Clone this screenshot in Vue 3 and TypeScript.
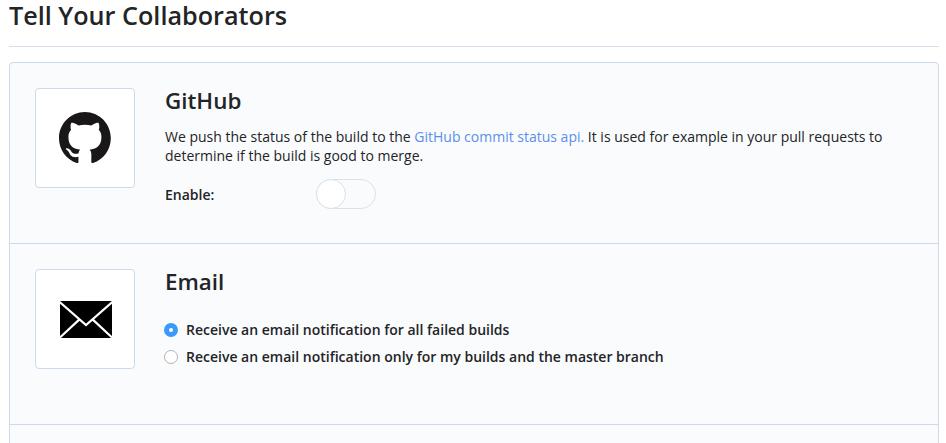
<script setup lang="ts">
import { ref } from 'vue'

type Choice = { value: string; label: string }

const enabled = ref(false)
const selected = ref('all')
const choices: Choice[] = [
  { value: 'all', label: 'Receive an email notification for all failed builds' },
  { value: 'mine', label: 'Receive an email notification only for my builds and the master branch' },
]
</script>

<template>
  <main class="page">
    <h1 class="title">Tell Your Collaborators</h1>
    <div class="panel">
      <section class="row">
        <div class="logo">
          <svg class="github" viewBox="0 0 98 96" aria-hidden="true">
            <path d="M48.854 0C21.839 0 0 22 0 49.217c0 21.756 13.993 40.172 33.405 46.69 2.427.49 3.316-1.059 3.316-2.362 0-1.141-.08-5.052-.08-9.127-13.59 2.934-16.42-5.867-16.42-5.867-2.184-5.704-5.42-7.17-5.42-7.17-4.448-3.015.324-3.015.324-3.015 4.934.326 7.523 5.052 7.523 5.052 4.367 7.496 11.404 5.378 14.235 4.074.404-3.178 1.699-5.378 3.074-6.6-10.839-1.141-22.243-5.378-22.243-24.283 0-5.378 1.94-9.778 5.014-13.2-.485-1.222-2.184-6.275.486-13.038 0 0 4.125-1.304 13.426 5.052a46.97 46.97 0 0 1 12.214-1.63c4.125 0 8.33.571 12.213 1.63 9.302-6.356 13.427-5.052 13.427-5.052 2.67 6.763.97 11.816.485 13.038 3.155 3.422 5.015 7.822 5.015 13.2 0 18.905-11.404 23.06-22.324 24.283 1.78 1.548 3.316 4.481 3.316 9.126 0 6.6-.08 11.897-.08 13.526 0 1.304.89 2.853 3.316 2.364 19.412-6.52 33.405-24.935 33.405-46.691C97.707 22 75.788 0 48.854 0z" />
          </svg>
        </div>
        <div class="body">
          <h2 class="name">GitHub</h2>
          <p class="text">
            We push the status of the build to the <a class="link">GitHub commit status api.</a> It is used for example in your pull requests to<br />determine if the build is good to merge.
          </p>
          <div class="setting">
            <span class="setting-label">Enable:</span>
            <button class="switch" :class="{ on: enabled }" type="button" role="switch" :aria-checked="enabled" @click="enabled = !enabled">
              <span class="knob"></span>
            </button>
          </div>
        </div>
      </section>
      <section class="row">
        <div class="logo">
          <svg class="mail" viewBox="0 0 52 37" aria-hidden="true">
            <rect width="52" height="37" rx="1.5" />
            <path d="M0 1.3 26 24 52 1.3M0 36.4 19.2 18.6M52 36.4 32.8 18.6" />
          </svg>
        </div>
        <div class="body">
          <h2 class="name">Email</h2>
          <div class="choices">
            <label v-for="c in choices" :key="c.value" class="choice">
              <input v-model="selected" class="radio" type="radio" name="email" :value="c.value" />
              <span>{{ c.label }}</span>
            </label>
          </div>
        </div>
      </section>
      <section class="row"></section>
    </div>
  </main>
</template>

<style>
body {
  background: #fff;
}
</style>

<style scoped>
.page {
  box-sizing: border-box;
  height: 443px;
  overflow: hidden;
  padding: 0 7px 0 9px;
  color: #222425;
  font-family: "Open Sans", "Noto Sans", sans-serif;
  font-size: 14px;
}
.title {
  box-sizing: border-box;
  height: 47px;
  margin: 0 0 15px;
  border-bottom: 1px solid #d6e0ea;
  font-size: 25.2px;
  font-weight: 600;
  line-height: 31px;
}
.panel {
  border: 1px solid #cbdaec;
  border-radius: 4px;
  background: #fafbfd;
}
.row {
  box-sizing: border-box;
  display: flex;
  gap: 30px;
  height: 181px;
  padding: 25px;
  border-bottom: 1px solid #cbdaec;
}
.logo {
  box-sizing: border-box;
  display: flex;
  align-items: center;
  justify-content: center;
  flex: none;
  width: 100px;
  height: 100px;
  border: 1px solid #cbdaec;
  border-radius: 4px;
  background: #fff;
}
.github {
  width: 52px;
  height: 51px;
  margin-top: -1px;
  fill: #191717;
}
.mail {
  width: 52px;
  height: 37px;
  margin-left: 2px;
}
.mail path {
  fill: none;
  stroke: #fff;
  stroke-width: 2.2;
}
.body {
  flex: 1;
  white-space: nowrap;
}
.name {
  margin: 0;
  font-size: 22.4px;
  font-weight: 600;
  line-height: 26px;
}
.text {
  margin: 13px 0 0;
  line-height: 19px;
}
.link {
  color: #5a8fec;
}
.setting {
  display: flex;
  align-items: center;
  margin-top: 14px;
}
.setting-label {
  width: 151px;
  font-weight: 600;
}
.switch {
  box-sizing: border-box;
  width: 60px;
  height: 30px;
  padding: 0;
  border: 1px solid #d8e2ea;
  border-radius: 15px;
  background: transparent;
}
.knob {
  box-sizing: border-box;
  display: block;
  width: 30px;
  height: 30px;
  margin: -1px;
  border: 1px solid #d8e2ea;
  border-radius: 50%;
  background: #fff;
}
.switch.on {
  background: #3b99fc;
}
.switch.on .knob {
  margin-left: 29px;
}
.choices {
  margin-top: 21px;
}
.choice {
  display: flex;
  align-items: center;
  gap: 8px;
  height: 27px;
  font-weight: 600;
}
.radio {
  appearance: none;
  box-sizing: border-box;
  width: 14px;
  height: 14px;
  margin: 0 0 0 -1px;
  border: 1px solid #b3b3b3;
  border-radius: 50%;
  background: #fff;
}
.radio:checked {
  border: 5px solid #3b99fc;
}
</style>
